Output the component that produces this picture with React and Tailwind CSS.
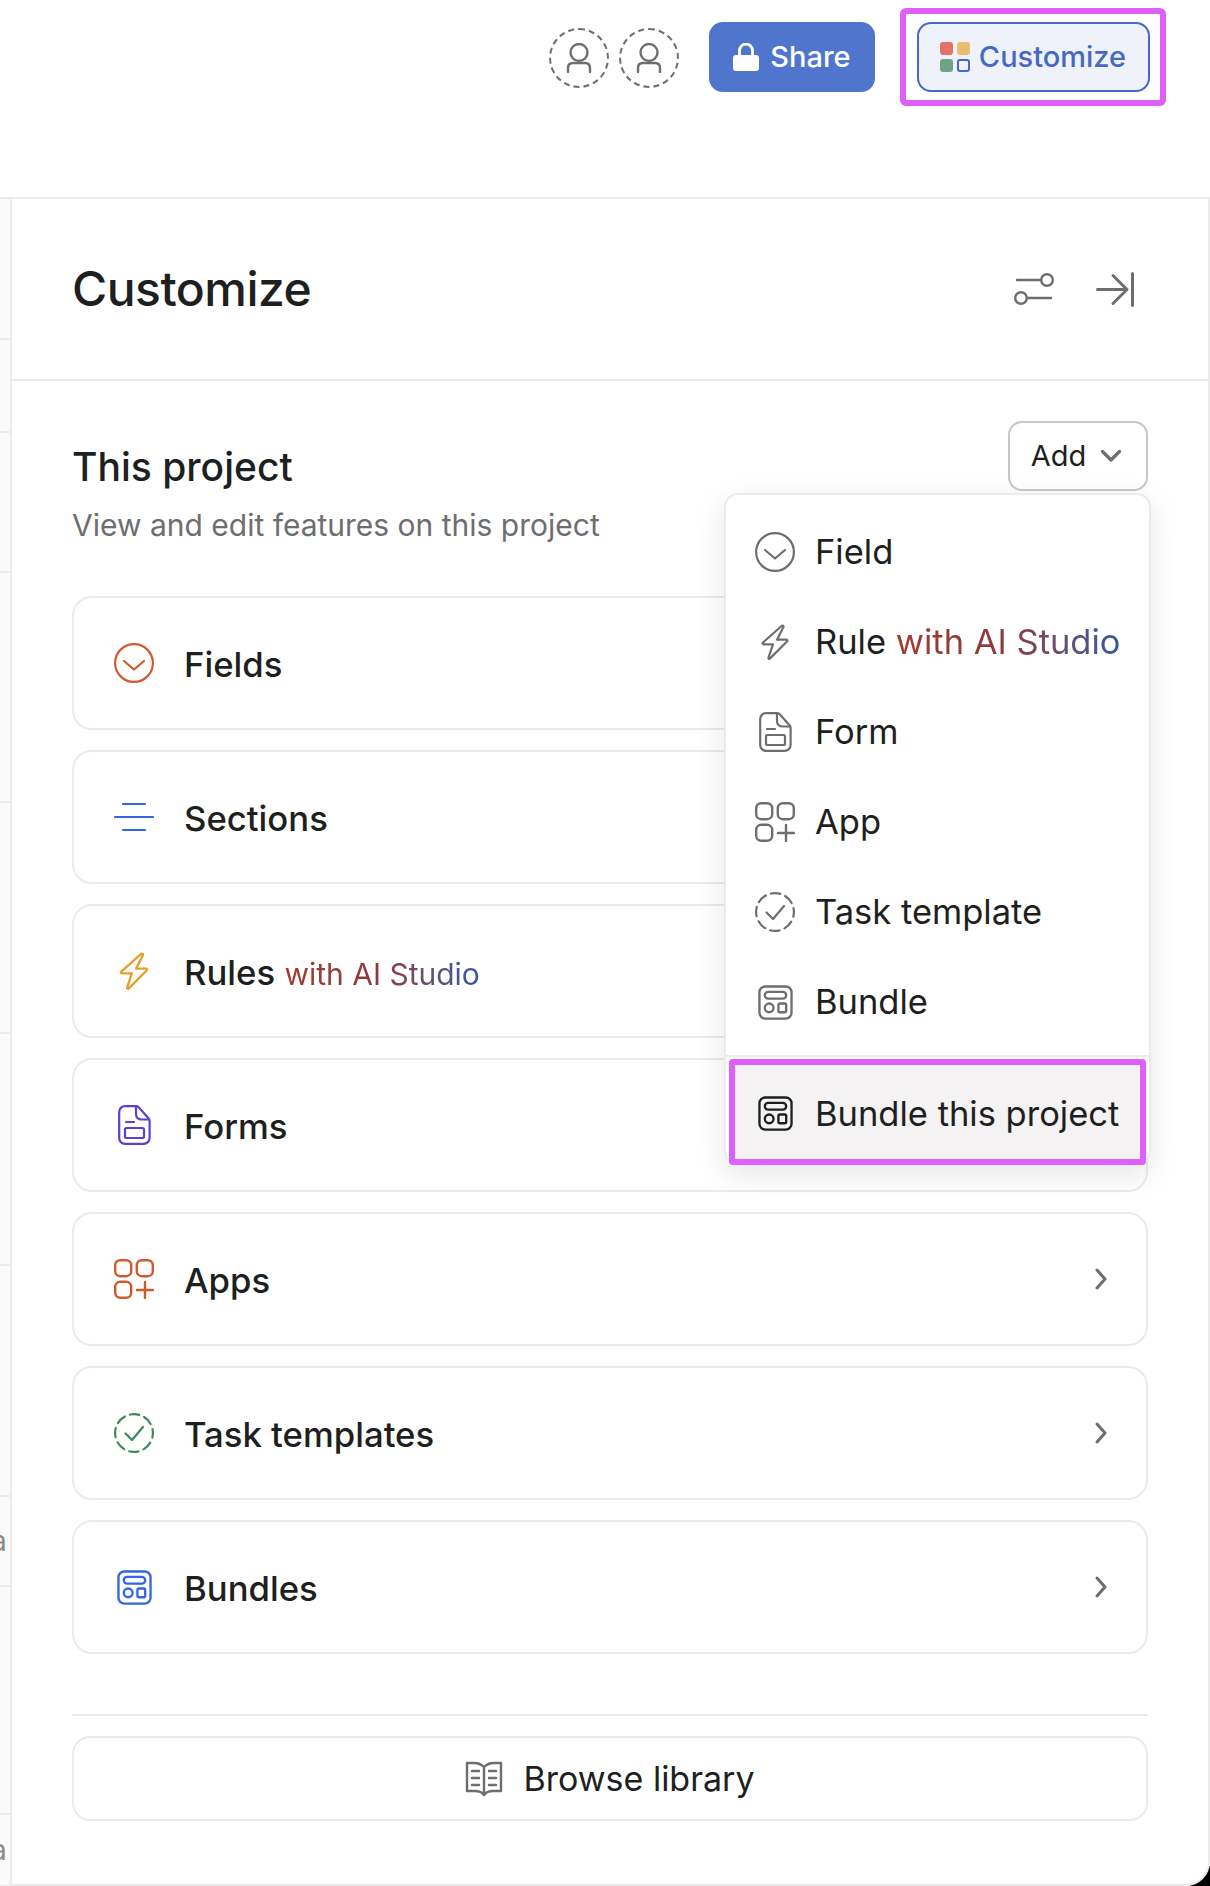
import React from 'react';

const INK = '#1e1f21';

function ChevronCircle({ className }) {
  return (
    <svg viewBox="0 0 40 40" fill="none" stroke="currentColor" strokeWidth="2.2" strokeLinecap="round" strokeLinejoin="round" className={className}>
      <circle cx="20" cy="20" r="18.900" />
      <path d="M10 18l10 8.500 10-8.500" />
    </svg>
  );
}

function Bolt({ className }) {
  return (
    <svg viewBox="0 0 28 36" fill="none" stroke="currentColor" strokeWidth="2.2" strokeLinecap="round" strokeLinejoin="round" className={className}>
      <path d="M20.500 2L2 18.500c-.8.8-.4 1.800.7 1.800H12L7.500 33.500c-.3 1.200.8 1.700 1.600.9L26 17.500c.8-.8.4-1.800-.7-1.800H16L22.500 3c.3-1.200-1.200-1.900-2-1z" />
    </svg>
  );
}

function FormIcon({ className }) {
  return (
    <svg viewBox="0 0 33 40" fill="none" stroke="currentColor" strokeWidth="2.2" strokeLinecap="round" strokeLinejoin="round" className={className}>
      <path d="M7 1.200h11c1 0 2 .4 2.700 1.100l10 11.300c.6.7.9 1.500.9 2.300V33c0 3.300-2.700 5.800-6 5.800H7c-3.300 0-5.800-2.500-5.800-5.800V7c0-3.300 2.500-5.800 5.800-5.800z" />
      <path d="M18 2v7c0 3 2 5.500 5.500 5.500H31" />
      <path d="M8 17h8" />
      <rect x="7" y="23" width="19" height="10" rx="1.500" />
    </svg>
  );
}

function AppsIcon({ className }) {
  return (
    <svg viewBox="0 0 40 40" fill="none" stroke="currentColor" strokeWidth="2.400" strokeLinecap="round" strokeLinejoin="round" className={className}>
      <rect x="1.200" y="1.200" width="16" height="16" rx="5" />
      <rect x="22.800" y="1.200" width="16" height="16" rx="5" />
      <rect x="1.200" y="22.800" width="16" height="16" rx="5" />
      <path d="M23 31h16M31 23v16" />
    </svg>
  );
}

function TaskIcon({ className }) {
  return (
    <svg viewBox="0 0 40 40" fill="none" stroke="currentColor" strokeWidth="2.200" strokeLinecap="round" strokeLinejoin="round" className={className}>
      <circle cx="20" cy="20" r="18.900" strokeDasharray="9.500 5.340" strokeDashoffset="4.750" />
      <path d="M11.500 20.500l6.500 6.500 11-13" />
    </svg>
  );
}

function BundleIcon({ className }) {
  return (
    <svg viewBox="0 0 36 36" fill="none" stroke="currentColor" strokeWidth="2.400" strokeLinecap="round" strokeLinejoin="round" className={className}>
      <rect x="1.500" y="1.500" width="33" height="33" rx="6" />
      <rect x="7" y="7" width="22" height="7" rx="3.500" />
      <circle cx="11.500" cy="23.500" r="4.500" />
      <rect x="21" y="19" width="8" height="9" rx="1.500" />
    </svg>
  );
}

function SectionsIcon({ className }) {
  return (
    <svg viewBox="0 0 40 30" fill="none" stroke="currentColor" strokeWidth="2.200" strokeLinecap="round" className={className}>
      <path d="M9 2h22M1 15h38M9 28h22" />
    </svg>
  );
}

function RightChevron() {
  return (
    <svg viewBox="0 0 14 24" fill="none" stroke="currentColor" strokeWidth="3" strokeLinecap="round" strokeLinejoin="round" className="w-[14px] h-[24px] text-[#6d6e6f]">
      <path d="M3 3l8 9-8 9" />
    </svg>
  );
}

function PersonCircle() {
  return (
    <div className="w-[60px] h-[60px] rounded-full border-2 border-dashed border-[#6d6e6f] flex items-center justify-center">
      <svg viewBox="0 0 26 30" fill="none" stroke="#6d6e6f" strokeWidth="2.400" strokeLinecap="round" className="w-[26px] h-[30px]">
        <circle cx="13" cy="9.500" r="8.500" />
        <path d="M2 29v-4c0-3 2-5 5-5h12c3 0 5 2 5 5v4" />
      </svg>
    </div>
  );
}

function FeatureCard({ icon, children }) {
  return (
    <div className="h-[134px] rounded-[20px] border-2 border-[#edeaea] flex items-center pl-[40px] pr-[38px]">
      <div className="w-[40px] flex justify-center shrink-0">{icon}</div>
      <div className="ml-[30px] flex-1 text-[34.700px] font-medium pt-[2px]">{children}</div>
      <RightChevron />
    </div>
  );
}

function AiLabel({ className }) {
  return (
    <span className={`bg-gradient-to-r from-[#a23b2c] via-[#8b3a40] to-[#2f55a4] bg-clip-text text-transparent ${className}`}>
      with AI Studio
    </span>
  );
}

function MenuItem({ icon, children }) {
  return (
    <div className="h-[90px] flex items-center pl-[29px]">
      <div className="w-[40px] flex justify-center shrink-0 text-[#6d6e6f]">{icon}</div>
      <div className="ml-[20px] text-[34.500px] whitespace-nowrap">{children}</div>
    </div>
  );
}

function BehindRow({ height, label }) {
  return (
    <div style={{ height }} className="border-b-2 border-[#edeaea] flex items-center overflow-hidden bg-[#fafafa]">
      {label && <span className="text-[28px] text-[#8a8a8a] ml-[-9px]">a</span>}
    </div>
  );
}

export default function App() {
  return (
    <div className="w-[1210px] h-[1886px] bg-white overflow-hidden relative" style={{ fontFamily: 'Inter, "Noto Sans", sans-serif', color: INK }}>
      {/* Dark corner showing outside the rounded panel */}
      <div className="absolute right-0 bottom-0 w-[20px] h-[20px] bg-black" />

      {/* Top bar */}
      <div className="h-[197px] flex items-start justify-end pt-[8px] pr-[44px]">
        <div className="flex items-center gap-[10px] mt-[20px] mr-[30px]">
          <PersonCircle />
          <PersonCircle />
        </div>
        <button className="mt-[14px] w-[166px] h-[70px] rounded-[14px] bg-[#4f75cc] text-white text-[29px] font-medium flex items-center justify-center gap-[11px] mr-[25px]">
          <svg viewBox="0 0 26 28" className="w-[26px] h-[28px]">
            <path d="M6.500 13V7.500a6.500 6.500 0 0 1 13 0V13" fill="none" stroke="#fff" strokeWidth="2.800" />
            <rect x="0" y="12" width="26" height="16" rx="3" fill="#fff" />
          </svg>
          Share
        </button>
        <div className="w-[266px] h-[98px] border-[6px] border-[#e05ffb] rounded-[6px] flex items-center justify-center">
          <button className="w-[233px] h-[70px] rounded-[14px] bg-[#f0f2fb] border-2 border-[#4569c4] text-[#4569c4] text-[29px] font-medium flex items-center justify-center gap-[9px]">
            <span className="grid grid-cols-2 gap-[4px] w-[30px]">
              <span className="w-[13px] h-[13px] rounded-[3px] bg-[#e37369]" />
              <span className="w-[13px] h-[13px] rounded-[3px] bg-[#e8bd72]" />
              <span className="w-[13px] h-[13px] rounded-[3px] bg-[#6fa382]" />
              <span className="w-[13px] h-[13px] rounded-[3px] border-2 border-[#4569c4]" />
            </span>
            Customize
          </button>
        </div>
      </div>

      <div className="border-t-2 border-[#edeaea] flex h-[1689px]">
        {/* Sliver of the table behind the panel */}
        <div className="w-[10px] shrink-0">
          <BehindRow height={141} />
          <BehindRow height={93} />
          <BehindRow height={140} />
          <BehindRow height={230} />
          <BehindRow height={231} />
          <BehindRow height={232} />
          <BehindRow height={231} />
          <BehindRow height={90} label />
          <BehindRow height={228} />
          <BehindRow height={72} label />
        </div>

        {/* Customize panel */}
        <div className="flex-1 relative bg-white border-l-2 border-r-2 border-b-2 border-[#edeaea] rounded-br-[24px] flex flex-col">
          <div className="h-[182px] border-b-2 border-[#edeaea] flex items-center justify-between pl-[60px] pr-[74px]">
            <h1 className="text-[48px] font-medium tracking-[-0.5px]">Customize</h1>
            <div className="flex items-center gap-[42px]">
              <svg viewBox="0 0 40 32" fill="none" stroke="#6d6e6f" strokeWidth="2.400" strokeLinecap="round" className="w-[40px] h-[32px]">
                <path d="M3 7h24M13 25h24" />
                <circle cx="33" cy="7" r="5.800" />
                <circle cx="7" cy="25" r="5.800" />
              </svg>
              <svg viewBox="0 0 38 35" fill="none" stroke="#6d6e6f" strokeWidth="3" strokeLinecap="round" strokeLinejoin="round" className="w-[38px] h-[35px]">
                <path d="M1.500 17.500H31M17 3.500l14 14-14 14M36.500 1.500v32" />
              </svg>
            </div>
          </div>

          <div className="px-[60px] flex-1 flex flex-col">
            <div className="h-[215px] relative pt-[64px]">
              <h2 className="text-[39px] leading-[44px] font-medium">This project</h2>
              <p className="text-[30px] leading-[40px] text-[#6d6e6f] mt-[16px]">View and edit features on this project</p>
              <button className="absolute right-0 top-[40px] w-[140px] h-[70px] rounded-[14px] border-2 border-[#c9c7c7] bg-white text-[29px] flex items-center justify-center gap-[14px] pr-[3px]">
                Add
                <svg viewBox="0 0 22 14" fill="none" stroke="#6d6e6f" strokeWidth="3.200" strokeLinecap="round" strokeLinejoin="round" className="w-[22px] h-[14px]">
                  <path d="M2.500 2.500l8.500 8.500 8.500-8.500" />
                </svg>
              </button>
            </div>

            <div className="flex flex-col gap-[20px]">
              <FeatureCard icon={<ChevronCircle className="w-[40px] h-[40px] text-[#d1592e]" />}>Fields</FeatureCard>
              <FeatureCard icon={<SectionsIcon className="w-[40px] h-[30px] text-[#3366e0]" />}>Sections</FeatureCard>
              <FeatureCard icon={<Bolt className="w-[30px] h-[38px] text-[#e3a02f]" />}>
                Rules <AiLabel className="text-[30px] font-normal" />
              </FeatureCard>
              <FeatureCard icon={<FormIcon className="w-[33px] h-[40px] text-[#5a40d6]" />}>Forms</FeatureCard>
              <FeatureCard icon={<AppsIcon className="w-[40px] h-[40px] text-[#d1592e]" />}>Apps</FeatureCard>
              <FeatureCard icon={<TaskIcon className="w-[40px] h-[40px] text-[#3a8a5c]" />}>Task templates</FeatureCard>
              <FeatureCard icon={<BundleIcon className="w-[35px] h-[35px] text-[#3366e0]" />}>Bundles</FeatureCard>
            </div>

            <div className="mt-[60px] border-t-2 border-[#edeaea] pt-[20px]">
              <button className="w-full h-[85px] rounded-[18px] border-2 border-[#edeaea] flex items-center justify-center gap-[20px] text-[34px]">
                <svg viewBox="0 0 38 36" fill="none" stroke="#6d6e6f" strokeWidth="2.400" strokeLinecap="round" strokeLinejoin="round" className="w-[38px] h-[36px]">
                  <path d="M19 6c-3-3-6-4-10-4H2v28h8c4 0 7 1 9 4 2-3 5-4 9-4h8V2h-7c-4 0-7 1-10 4zM19 6v28" />
                  <path d="M7 10h7M7 17h7M7 24h7M24 10h7M24 17h7M24 24h7" />
                </svg>
                Browse library
              </button>
            </div>
          </div>
        </div>
      </div>

      {/* Add menu */}
      <div className="absolute left-[724px] top-[493px] w-[427px] h-[672px] bg-white rounded-[14px] border-2 border-[#edeaea] shadow-[0_10px_30px_rgba(0,0,0,0.10)]">
        <div className="pt-[12px]">
          <MenuItem icon={<ChevronCircle className="w-[40px] h-[40px]" />}>Field</MenuItem>
          <MenuItem icon={<Bolt className="w-[28px] h-[36px]" />}>
            Rule <AiLabel />
          </MenuItem>
          <MenuItem icon={<FormIcon className="w-[33px] h-[40px]" />}>Form</MenuItem>
          <MenuItem icon={<AppsIcon className="w-[40px] h-[40px]" />}>App</MenuItem>
          <MenuItem icon={<TaskIcon className="w-[40px] h-[40px]" />}>Task template</MenuItem>
          <MenuItem icon={<BundleIcon className="w-[35px] h-[35px]" />}>Bundle</MenuItem>
        </div>
        <div className="border-t-2 border-[#edeaea] mt-[8px] pt-[2px] px-[3px]">
          <div className="h-[106px] bg-[#f4f2f3] border-[6px] border-[#e05ffb] rounded-[4px] flex items-center pl-[20px] pt-[3px]">
            <div className="w-[40px] flex justify-center shrink-0">
              <BundleIcon className="w-[35px] h-[35px] text-[#1e1f21]" />
            </div>
            <div className="ml-[20px] text-[34.500px] whitespace-nowrap">Bundle this project</div>
          </div>
        </div>
      </div>
    </div>
  );
}
